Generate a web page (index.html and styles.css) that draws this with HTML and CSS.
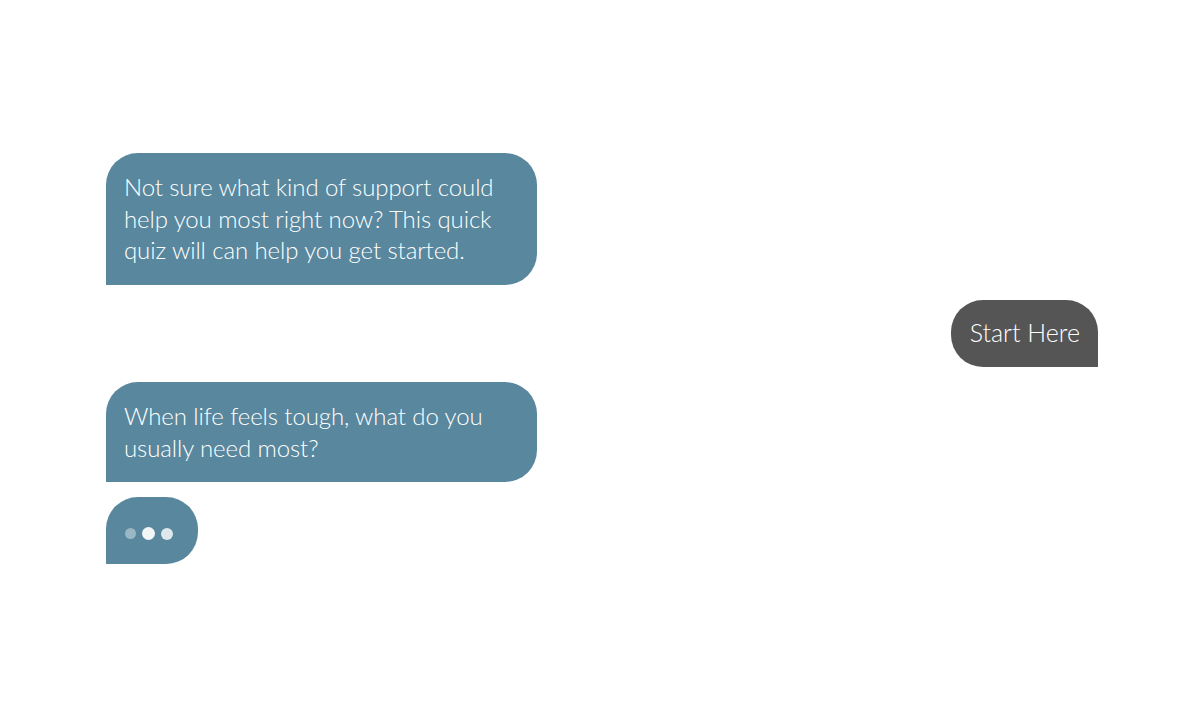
FILE: index.html
```html
<!DOCTYPE html>
<html lang="en">
<head>
    <meta charset="UTF-8">
    <title>Support Quiz</title>
    <link rel="stylesheet" href="styles.css">
</head>
<body>
    <div class="chat">
        <div class="bubble bot">
            Not sure what kind of support could help you most right now? This quick quiz will can help you get started.
        </div>
        <div class="bubble user">Start Here</div>
        <div class="bubble bot">
            When life feels tough, what do you usually need most?
        </div>
        <div class="bubble bot typing">
            <span class="dot dot-1"></span>
            <span class="dot dot-2"></span>
            <span class="dot dot-3"></span>
        </div>
    </div>
</body>
</html>
```

FILE: styles.css
```css
* {
    margin: 0;
    padding: 0;
    box-sizing: border-box;
}

body {
    background-color: #ffffff;
    font-family: Lato, "Open Sans", sans-serif;
    font-weight: 300;
}

.chat {
    display: flex;
    flex-direction: column;
    gap: 15px;
    padding: 153px 102px 0 106px;
}

.bubble {
    color: #ffffff;
    font-size: 24px;
    line-height: 31.5px;
    letter-spacing: -0.1px;
    padding: 18px 18px 19px;
}

.bot {
    align-self: flex-start;
    width: 431px;
    background-color: #58879e;
    border-radius: 32px 32px 32px 0;
}

.user {
    align-self: flex-end;
    background-color: #555555;
    border-radius: 32px 32px 0 32px;
    font-size: 25px;
    letter-spacing: 0;
    padding: 17px 18px 19px 19px;
}

.typing {
    width: 92px;
    height: 67px;
    display: flex;
    align-items: center;
    gap: 6px;
    padding: 6px 0 0 19px;
}

.dot {
    width: 12px;
    height: 12px;
    border-radius: 50%;
    background-color: #ffffff;
}

.dot-1 {
    width: 11px;
    height: 11px;
    opacity: 0.4;
}

.dot-2 {
    width: 13px;
    height: 13px;
    opacity: 0.92;
}

.dot-3 {
    opacity: 0.8;
}
```
